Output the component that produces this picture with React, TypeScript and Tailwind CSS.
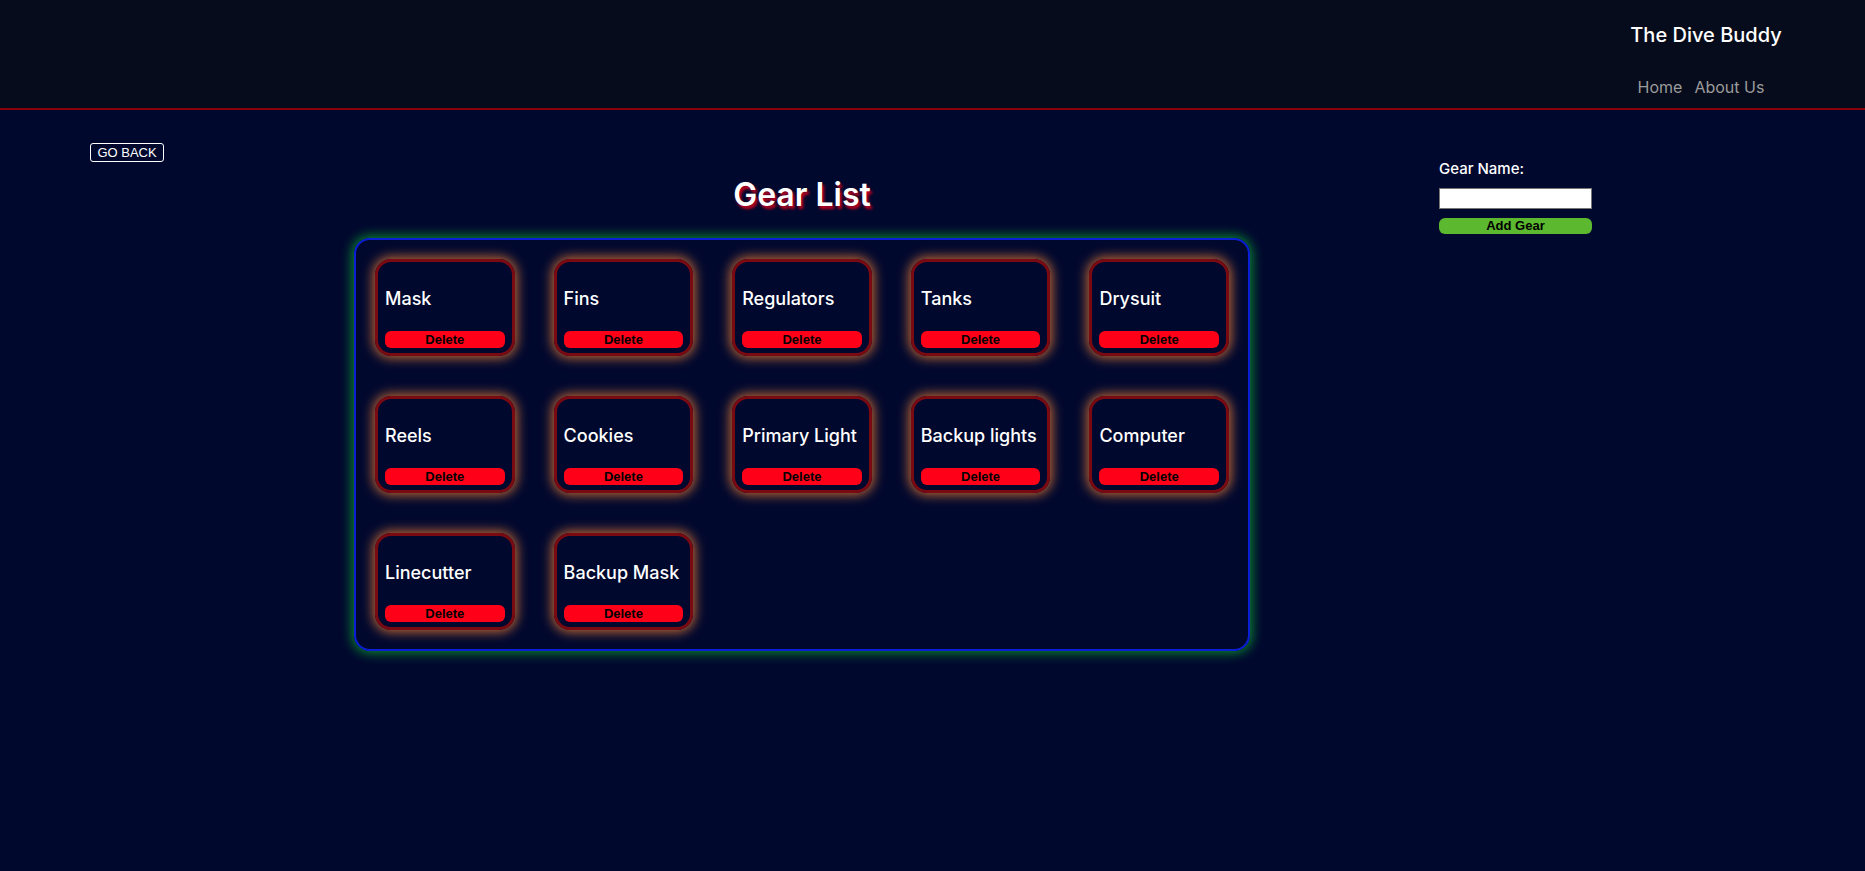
const gear = [
  "Mask",
  "Fins",
  "Regulators",
  "Tanks",
  "Drysuit",
  "Reels",
  "Cookies",
  "Primary Light",
  "Backup lights",
  "Computer",
  "Linecutter",
  "Backup Mask",
];

const App = () => {
  return (
    <div className="min-h-[871px] bg-[#00082e] font-['Inter','Noto_Sans',sans-serif] text-white">
      <header className="flex h-[110px] justify-end border-b-2 border-[#8a0008] bg-[#070c1c]">
        <div className="mr-[29px] flex w-[260px] flex-col items-center">
          <h2 className="mt-[22px] text-[20px] leading-[26px] font-medium">The Dive Buddy</h2>
          <nav className="mt-[28px] mr-[10px] flex gap-[12px] text-[16px] leading-[22px] text-[#9b9b9b]">
            <a>Home</a>
            <a>About Us</a>
          </nav>
        </div>
      </header>

      <main className="flex pl-[90px]">
        <div className="w-[74px] pt-[33px]">
          <button className="block h-[19px] w-[74px] rounded-[3px] border border-white font-['Liberation_Sans',Arial,sans-serif] text-[13px] leading-none text-white">
            GO BACK
          </button>
        </div>

        <section className="ml-[190px] w-[896px] pt-[65px]">
          <h1 className="h-[40px] text-center text-[32px] leading-[40px] font-semibold [text-shadow:2px_3px_3px_#c8001e]">
            Gear List
          </h1>
          <div className="mt-[23px] grid grid-cols-5 gap-x-[39px] gap-y-[40px] rounded-[16px] border-2 border-[#0b1fd6] p-[19px] shadow-[0_0_12px_2px_#0b8a32]">
            {gear.map((g) => (
              <div
                key={g}
                className="h-[97px] w-full rounded-[16px] border-[3px] border-[#7a0a12] px-[7px] pt-[25px] shadow-[0_0_12px_2px_#c26a34]"
              >
                <p className="h-[24px] text-[18px] leading-[24px] font-medium whitespace-nowrap">{g}</p>
                <button className="mt-[20px] block h-[17px] w-full rounded-[6px] bg-[#ff0019] font-['Liberation_Sans',Arial,sans-serif] text-[13px] leading-[17px] font-bold text-black">
                  Delete
                </button>
              </div>
            ))}
          </div>
        </section>

        <form className="ml-[189px] flex w-[153px] flex-col pt-[49px]">
          <label className="text-[15px] leading-[20px] font-medium">Gear Name:</label>
          <input type="text" className="mt-[9px] h-[21px] w-[153px] border border-[#767676] bg-white text-black outline-none" />
          <button type="button" className="mt-[9px] h-[16px] w-[153px] rounded-[6px] bg-[#5cb82f] font-['Liberation_Sans',Arial,sans-serif] text-[13px] leading-[16px] font-bold text-black">
            Add Gear
          </button>
        </form>
      </main>
    </div>
  );
};

export default App;
